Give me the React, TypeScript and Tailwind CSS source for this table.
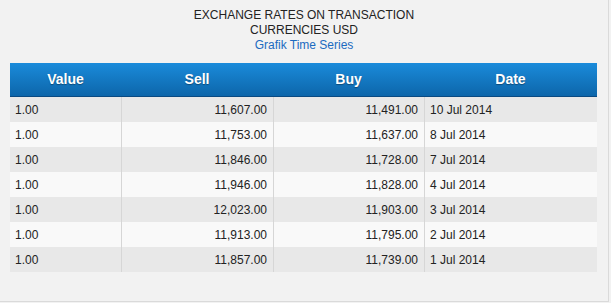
const rows = [
  { value: "1.00", sell: "11,607.00", buy: "11,491.00", date: "10 Jul 2014" },
  { value: "1.00", sell: "11,753.00", buy: "11,637.00", date: "8 Jul 2014" },
  { value: "1.00", sell: "11,846.00", buy: "11,728.00", date: "7 Jul 2014" },
  { value: "1.00", sell: "11,946.00", buy: "11,828.00", date: "4 Jul 2014" },
  { value: "1.00", sell: "12,023.00", buy: "11,903.00", date: "3 Jul 2014" },
  { value: "1.00", sell: "11,913.00", buy: "11,795.00", date: "2 Jul 2014" },
  { value: "1.00", sell: "11,857.00", buy: "11,739.00", date: "1 Jul 2014" },
];

const cols = "grid grid-cols-[111px_152px_151px_173px]";

const App = () => {
  return (
    <div className="w-[611px] h-[303px] bg-[#f2f2f2] font-['Liberation_Sans',Arial,sans-serif] overflow-hidden">
      <div className="w-[609px] h-[302px] border-r border-b border-[#dadada] pt-[8px]">
        <div className="text-center text-[12px] leading-[15px] text-[#222]">
          <div>EXCHANGE RATES ON TRANSACTION</div>
          <div>CURRENCIES USD</div>
          <div className="text-[#1b6ac0]">Grafik Time Series</div>
        </div>

        <div className="ml-[10px] mt-[10px] w-[587px]">
          <div
            className={`${cols} h-[34px] items-center bg-gradient-to-b from-[#1a8bdb] to-[#0d66aa] border-b border-[#0a4a82] text-white text-[14px] font-bold [text-shadow:0_1px_1px_rgba(0,0,0,0.35)]`}
          >
            <div className="text-center">Value</div>
            <div className="text-center">Sell</div>
            <div className="text-center">Buy</div>
            <div className="text-center">Date</div>
          </div>

          {rows.map((r, i) => (
            <div
              key={i}
              className={`${cols} h-[25px] text-[12px] text-[#222] ${i % 2 === 0 ? "bg-[#e8e8e8]" : "bg-[#f9f9f9]"}`}
            >
              <div className="flex items-center pl-[5px]">{r.value}</div>
              <div className="flex items-center justify-end pr-[6px] border-l border-[#d6d6d6]">{r.sell}</div>
              <div className="flex items-center justify-end pr-[6px] border-l border-[#d6d6d6]">{r.buy}</div>
              <div className="flex items-center pl-[5px] border-l border-[#d6d6d6]">{r.date}</div>
            </div>
          ))}
        </div>
      </div>
    </div>
  );
};

export default App;
